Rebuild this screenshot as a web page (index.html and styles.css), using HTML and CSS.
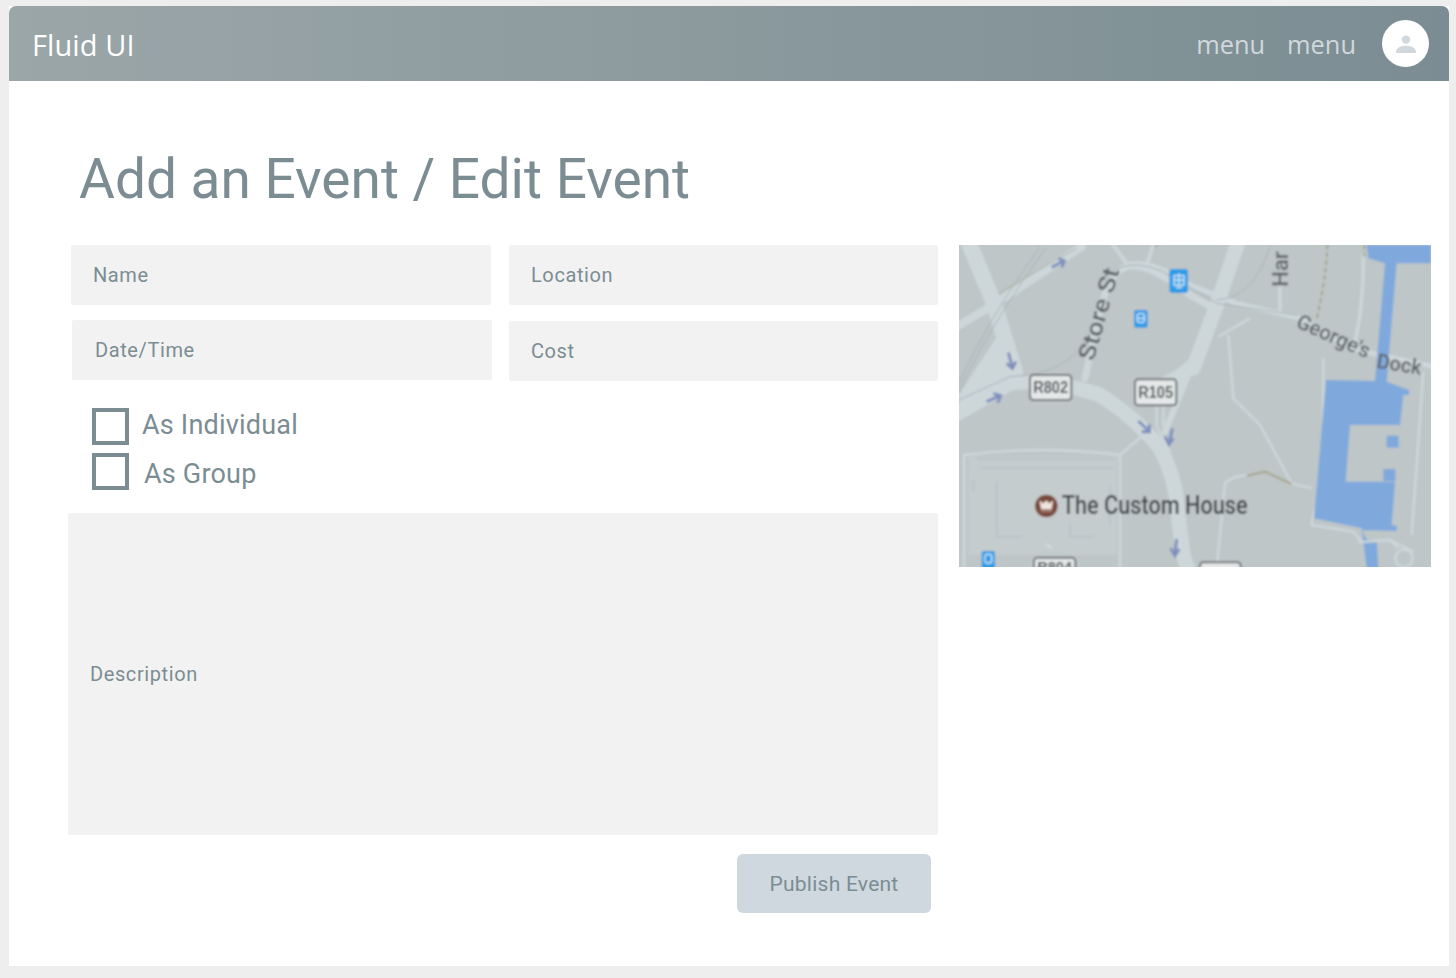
FILE: index.html
```html
<!DOCTYPE html>
<html lang="en">
<head>
<meta charset="utf-8">
<title>Fluid UI</title>
<link rel="stylesheet" href="styles.css">
</head>
<body>
<div class="frame">
  <header class="topbar">
    <div class="brand">Fluid UI</div>
    <nav class="nav"><span>menu</span><span>menu</span></nav>
    <div class="avatar">
      <svg viewBox="0 0 24 24" width="24" height="24"><circle cx="12" cy="7.6" r="4.2" fill="#d0d8de"/><path d="M2 20c0-4.2 5-6.2 10-6.2s10 2 10 6.2c0 .6-.4 1-1 1H3c-.6 0-1-.4-1-1z" fill="#d0d8de"/></svg>
    </div>
  </header>
  <main class="main">
    <h1 class="title">Add an Event / Edit Event</h1>
    <div class="content">
      <form class="form">
        <div class="row row-a">
          <div class="field field-name">Name</div>
          <div class="field field-loc">Location</div>
        </div>
        <div class="row row-b">
          <div class="field field-date">Date/Time</div>
          <div class="field field-cost">Cost</div>
        </div>
        <label class="check check-a"><span class="box"></span><span>As Individual</span></label>
        <label class="check check-b"><span class="box"></span><span>As Group</span></label>
        <div class="field field-desc">Description</div>
        <div class="actions"><div class="publish">Publish Event</div></div>
      </form>
      <svg class="map" viewBox="27 30 1416 966" width="472" height="322" xmlns="http://www.w3.org/2000/svg">
        <defs>
          <filter id="soft" x="-2%" y="-2%" width="104%" height="104%"><feGaussianBlur stdDeviation="2.4"/></filter>
          <clipPath id="mapclip"><rect x="27" y="30" width="1416" height="966"/></clipPath>
        </defs>
        <g clip-path="url(#mapclip)">
        <g filter="url(#soft)">
          <rect x="17" y="20" width="1436" height="986" fill="#bec6c8"/>
          <!-- building footprint -->
          <path d="M55 665H500V960H55Z" fill="#c4ccce"/>
          <path d="M80 672H495M90 700H490M140 740V905H215M360 860V905H430M70 735V770M480 750V870" fill="none" stroke="#b9c3c8" stroke-width="6"/>
          <path d="M285 930a25 25 0 0 1 20 10" fill="none" stroke="#d2dadd" stroke-width="6"/>
          <!-- wide roads -->
          <g fill="none" stroke="#cdd7da" stroke-linecap="round" stroke-linejoin="round">
            <path d="M55 20L130 200L195 410" stroke-width="48"/>
            <path d="M20 275L130 210L395 35" stroke-width="24"/>
            <path d="M15 540L180 445Q300 430 450 480Q560 550 630 640Q675 720 682 820L700 960L715 1010" stroke-width="44"/>
            <path d="M865 20L800 210L730 400" stroke-width="44"/>
            <path d="M725 395L645 590" stroke-width="18"/>
            <path d="M405 430L435 290Q470 110 530 95T720 180L800 225" stroke-width="20"/>
            <path d="M530 90Q600 70 720 150L860 205L1050 250L1200 340L1450 395" stroke-width="15"/>
            <path d="M490 30L530 85M610 30L590 90" stroke-width="11"/>
            <path d="M990 150V230M1240 60Q1240 230 1210 340" stroke-width="10"/>
          </g>
          <path d="M150 290L27 480V540L200 430L190 390Z" fill="#cdd7da"/>
          <path d="M640 425Q700 400 735 350L700 470L640 520L560 470Z" fill="#cdd7da"/>
          <!-- thin roads -->
          <g fill="none" stroke="#cdd7da" stroke-width="7" stroke-linejoin="round">
            <path d="M805 305L900 250M835 300L850 490L930 570L1025 745L1085 760"/>
            <path d="M1120 370V780Q1085 830 1085 870L1210 890L1235 920L1320 915L1390 950M1420 410L1385 900"/>
            <path d="M42 1000V660Q270 630 510 660L580 600M510 660V1000"/>
            <path d="M800 1000L825 745Q850 720 900 720"/>
            <path d="M620 510V575M640 510V575M620 575L660 650"/>
          </g>
          <!-- rail -->
          <g fill="none" stroke="#a9b2b5" stroke-width="3">
            <path d="M27 470Q120 270 290 35M27 445Q110 260 270 35M27 495L180 425Q350 420 410 310"/>
            <path d="M490 110Q540 70 640 110L800 205L1040 240M800 195Q910 190 960 35"/>
          </g>
          <path d="M145 175L380 40" fill="none" stroke="#b0b29f" stroke-width="3"/>
          <path d="M1132 30Q1130 100 1115 180L1100 255M1243 30V65" fill="none" stroke="#9f9f7e" stroke-width="5" stroke-dasharray="14 9"/>
          <path d="M890 722L945 710L1025 747" fill="none" stroke="#a7a68c" stroke-width="6"/>
          <!-- water -->
          <path d="M1250 30H1443V85H1340L1310 440L1377 465V480L1360 480L1350 570H1200L1187 740H1335L1325 870L1340 872V888L1235 885L1250 915H1280L1285 1000H1250L1235 880L1092 850L1128 435L1275 438L1305 85L1255 70Z" fill="#7fa9dc"/>
          <rect x="1310" y="602" width="36" height="36" fill="#7fa9dc"/>
          <rect x="1300" y="702" width="36" height="36" fill="#7fa9dc"/>
          <path d="M1225 922L1320 915L1345 940" fill="none" stroke="#cdd7da" stroke-width="7"/>
          <circle cx="1362" cy="970" r="26" fill="none" stroke="#cdd7da" stroke-width="7"/>
          <!-- direction arrows -->
          <g fill="none" stroke="#7f90bd" stroke-width="9" stroke-linejoin="miter">
            <path d="M305 97L340 78M325 70L343 78L335 97"/>
            <path d="M175 353L187 395M170 385L187 400L198 380"/>
            <path d="M110 500L150 482M130 475L152 482L143 503"/>
            <path d="M565 558L597 588M575 590L598 590L598 568"/>
            <path d="M667 580L658 625M645 605L657 628L670 610"/>
            <path d="M680 912L675 958M662 940L675 962L688 942"/>
          </g>
          <path d="M610 40l8-10h6z" fill="#7f90bd"/>
          <!-- transit badges -->
          <rect x="658" y="102" width="56" height="72" rx="8" fill="#2f9be6"/>
          <path d="M672 122H702V150H672ZM670 135H704M678 158H696M687 115V150" fill="none" stroke="#d8ecf8" stroke-width="4"/>
          <rect x="552" y="225" width="41" height="53" rx="6" fill="#2f9be6"/>
          <rect x="562" y="236" width="21" height="26" rx="5" fill="none" stroke="#d8ecf8" stroke-width="4"/>
          <path d="M562 250H583" stroke="#d8ecf8" stroke-width="4"/>
          <rect x="95" y="948" width="40" height="60" rx="6" fill="#2f9be6"/>
          <rect x="105" y="958" width="20" height="26" rx="5" fill="none" stroke="#d8ecf8" stroke-width="4"/>
          <!-- road shields -->
          <g fill="#e4e8e9" stroke="#6f7272" stroke-width="6">
            <rect x="240" y="420" width="124" height="75" rx="10"/>
            <rect x="555" y="433" width="124" height="78" rx="10"/>
            <rect x="252" y="968" width="124" height="60" rx="10"/>
            <rect x="750" y="982" width="122" height="50" rx="10"/>
          </g>
          <g font-family="'Liberation Sans Narrow','Liberation Sans',sans-serif" font-weight="700" fill="#4f5254">
            <text x="302" y="475" font-size="52" text-anchor="middle" textLength="104" lengthAdjust="spacingAndGlyphs">R802</text>
            <text x="617" y="490" font-size="52" text-anchor="middle" textLength="104" lengthAdjust="spacingAndGlyphs">R105</text>
            <text x="314" y="1012" font-size="46" text-anchor="middle" textLength="104" lengthAdjust="spacingAndGlyphs">R804</text>
          </g>
          <!-- labels -->
          <g font-family="'Roboto',sans-serif" font-weight="500" fill="#5f6468">
            <text font-size="70" transform="translate(430 380) rotate(-74)" textLength="285" lengthAdjust="spacingAndGlyphs">Store St</text>
            <text font-size="66" transform="translate(1014 155) rotate(-90)">Har</text>
            <text font-size="62" transform="translate(1035 275) rotate(24)" textLength="235" lengthAdjust="spacingAndGlyphs">George's</text>
            <text font-size="62" transform="translate(1278 398) rotate(9)" textLength="135" lengthAdjust="spacingAndGlyphs">Dock</text>
          </g>
          <circle cx="289" cy="813" r="34" fill="#7a4a3c"/>
          <path d="M270 798l10 8 9-9 9 9 10-8-4 24h-30zM272 828h34" fill="#efe6e0" stroke="#efe6e0" stroke-width="2"/>
          <text x="335" y="838" font-family="'Roboto',sans-serif" font-weight="500" font-size="78" fill="#3f4346" textLength="558" lengthAdjust="spacingAndGlyphs">The Custom House</text>
        </g>
        </g>
      </svg>
    </div>
  </main>
</div>
</body>
</html>
```

FILE: styles.css
```css
* { box-sizing: border-box; }
html, body { margin: 0; height: 100%; }
body {
  background: #eeeeee;
  padding: 6px 7px 12px 9px;
  font-family: "Roboto", sans-serif;
  color: #7b8d93;
}
.frame {
  width: 1440px;
  height: 960px;
  background: #ffffff;
  display: flex;
  flex-direction: column;
}
.topbar {
  height: 75px;
  flex: none;
  display: flex;
  align-items: center;
  padding: 0 20px 0 23px;
  border-radius: 7px 7px 0 0;
  background: linear-gradient(90deg, #9ba6a8 0%, #7b8d93 100%);
}
.brand {
  font-family: "Open Sans", sans-serif;
  font-size: 29px;
  letter-spacing: 0.1px;
  color: #ffffff;
  margin-top: 2px;
  margin-right: auto;
}
.nav {
  display: flex;
  gap: 22px;
  margin-right: 26px;
  font-family: "Open Sans", sans-serif;
  font-size: 25.4px;
  color: #d0d8dd;
  margin-top: 1px;
}
.avatar {
  width: 47px;
  height: 47px;
  border-radius: 50%;
  background: #ffffff;
  display: flex;
  align-items: center;
  justify-content: center;
}
.main { flex: 1; padding: 0; }
.title {
  margin: 0;
  padding: 64px 0 0 70px;
  height: 164px;
  font-weight: 400;
  font-size: 55px;
  line-height: 68px;
  color: #7b8d93;
}
.content {
  display: flex;
  align-items: flex-start;
  gap: 21px;
  padding-left: 59px;
}
.form { width: 870px; flex: none; }
.row { display: flex; align-items: flex-start; }
.row-a { padding-left: 3px; gap: 18px; }
.row-b { padding-left: 4px; gap: 17px; margin-top: 15px; }
.field {
  background: #f2f2f2;
  height: 60px;
  display: flex;
  align-items: center;
  padding-left: 22px;
  font-size: 20px;
  letter-spacing: 0.6px;
  border-radius: 2px;
  color: #7b8d93;
}
.field-date { padding-left: 23px; }
.field-name, .field-date { width: 420px; }
.field-loc, .field-cost { width: 429px; }
.field-cost { margin-top: 1px; }
.check {
  display: flex;
  align-items: center;
  margin-left: 24px;
  font-size: 27px;
  letter-spacing: 0.2px;
  height: 37px;
}
.check-a { margin-top: 27px; gap: 13px; }
.check-b { margin-top: 8px; gap: 15px; }
.check-b span:last-child { margin-top: 4px; }
.check-a span:last-child { margin-top: -4px; }
.box {
  width: 37px;
  height: 37px;
  border: 4px solid #7b8d93;
  background: #ffffff;
  flex: none;
}
.field-desc {
  width: 870px;
  height: 322px;
  margin-top: 23px;
}
.actions {
  display: flex;
  justify-content: flex-end;
  padding-right: 7px;
  margin-top: 19px;
}
.publish {
  width: 194px;
  height: 59px;
  display: flex;
  align-items: center;
  justify-content: center;
  background: #cfd8de;
  border-radius: 6px;
  font-size: 21px;
  letter-spacing: 0.25px;
  color: #7b8d93;
}
.map { display: block; flex: none; }
```
